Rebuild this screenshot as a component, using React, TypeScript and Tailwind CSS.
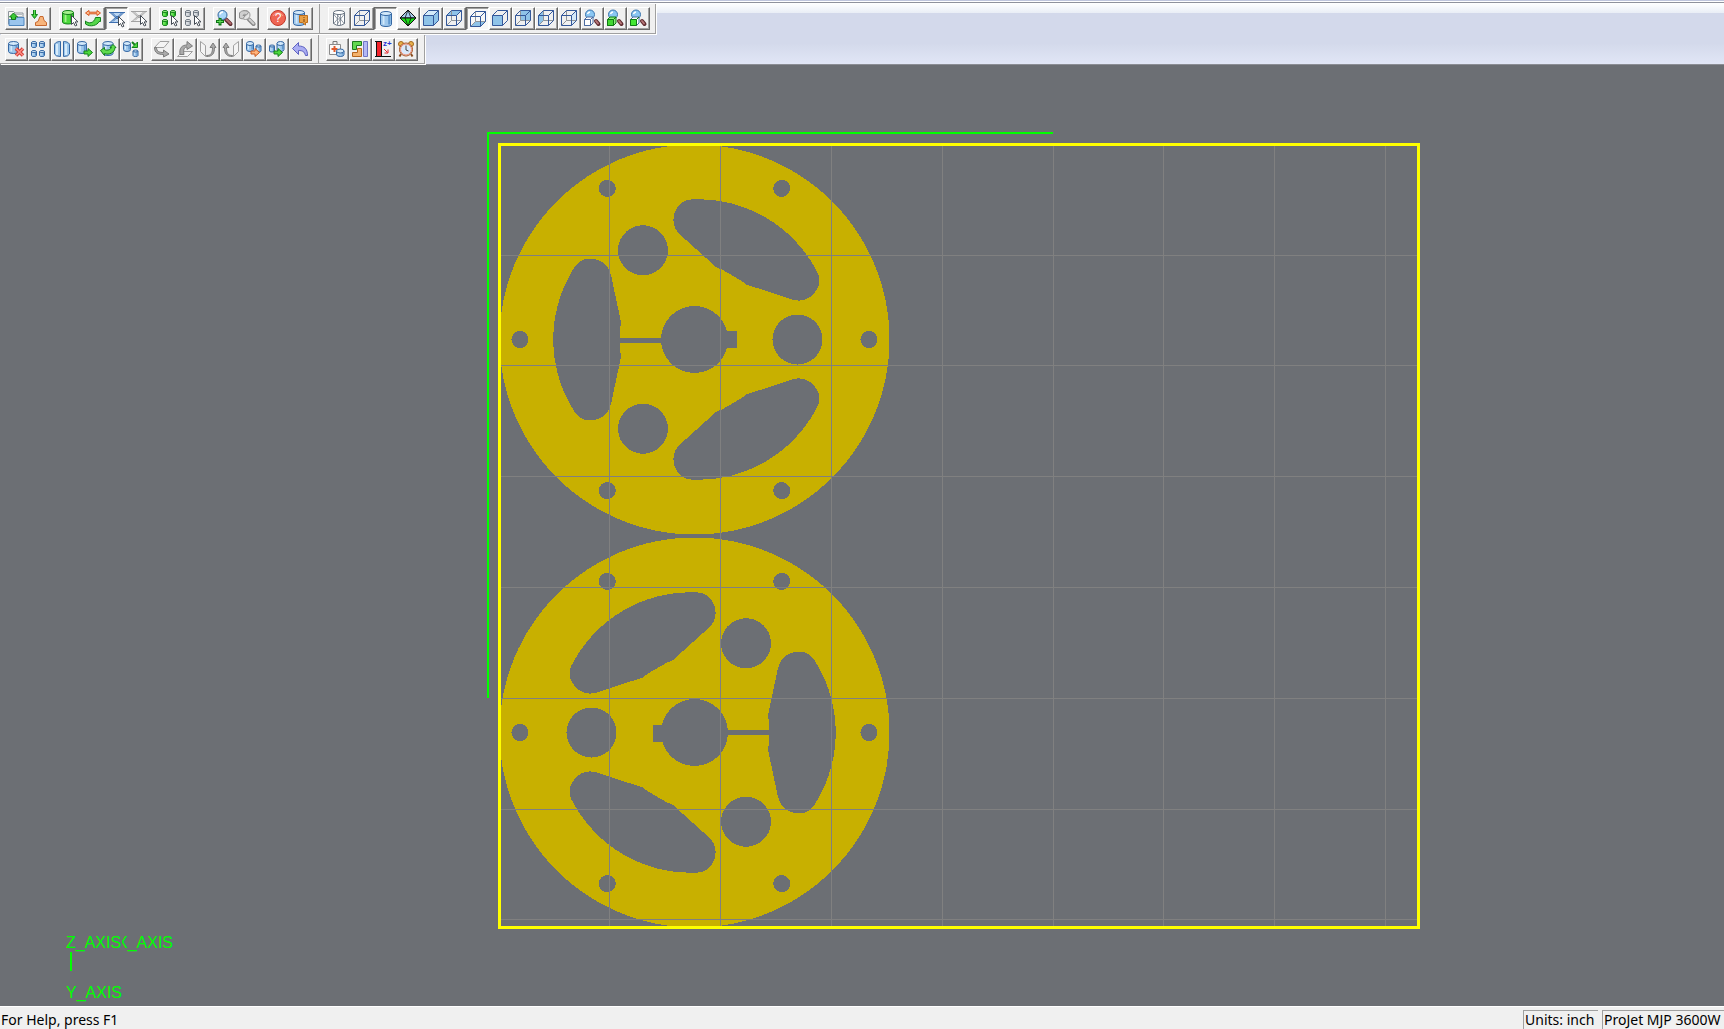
import React, { ReactNode } from 'react';
import clsx from 'clsx';

type Tool = { label: string; icon: ReactNode; pressed?: boolean };

type Palette = { line: string; body: string; top: string; shade: string };

const BLUE: Palette = { line: '#3567a3', body: '#9fc8ec', top: '#d3e9fa', shade: '#5f97cf' };
const GREEN: Palette = { line: '#14801a', body: '#4cd83c', top: '#a4f08c', shade: '#22a524' };
const GREY: Palette = { line: '#6d7680', body: '#cfd3d8', top: '#eef0f2', shade: '#a9afb6' };

type CylProps = { x: number; y: number; w: number; h: number; c?: Palette };

const Cyl = ({ x, y, w, h, c = BLUE }: CylProps) => {
  const ry = w > 6 ? 2 : 1;
  const r = w / 2;
  return (
    <g stroke={c.line}>
      <path d={`M${x} ${y + ry}v${h - 2 * ry}a${r} ${ry} 0 0 0 ${w} 0v${2 * ry - h}z`} fill={c.body} />
      <path d={`M${x + w * 0.8} ${y + ry + 1}v${h - 2 * ry - 1}`} stroke={c.shade} strokeWidth={w * 0.2} />
      <path d={`M${x + w * 0.28} ${y + ry + 1}v${h - 2 * ry - 1}`} stroke={c.top} strokeWidth={w * 0.16} />
      <ellipse cx={x + r} cy={y + ry} rx={r} ry={ry} fill={c.top} />
    </g>
  );
};

const Cursor = () => (
  <path d="M9.5 5.5v9l2-2 1.8 3.5 1.6-.8-1.7-3.3h2.8z" fill="#fff" stroke="#444b54" />
);

const FACES = {
  none: '',
  all: 'M.5 5.5 5.5.5h10v10l-5 5H.5z',
  top: 'M.5 5.5 5.5.5h10l-5 5z',
  bottom: 'M.5 15.5l5-5h10l-5 5z',
  front: 'M.5 5.5h10v10H.5z',
  back: 'M5.5.5h10v10h-10z',
  left: 'M.5 5.5 5.5.5v10l-5 5z',
  right: 'M10.5 5.5l5-5v10l-5 5z',
};

const Cube = ({ face }: { face: keyof typeof FACES }) => (
  <g strokeLinejoin="round">
    <path d={FACES[face]} fill={face === 'right' ? '#d6e8f7' : '#8fc3e8'} />
    {face === 'all' && <path d="M.5 5.5 5.5.5h10l-5 5z" fill="#d5ebfa" />}
    {face !== 'all' && face !== 'front' && (
      <path d="M5.5.5v10h10M5.5 10.5l-5 5" fill="none" stroke="#8f9499" />
    )}
    <path d="M.5 5.5 5.5.5h10v10l-5 5H.5zM.5 5.5h10v10M10.5 5.5l5-5" fill="none" stroke="#34589a" />
  </g>
);

const Lens = ({ grey }: { grey?: boolean }) => (
  <g>
    <path d="M10 9.5l4.5 4.5" stroke={grey ? '#888' : '#5e2a2e'} strokeWidth="4" strokeLinecap="round" />
    <path d="M10.5 9.5l4 4" stroke={grey ? '#d0d0d0' : '#b06a6c'} strokeWidth="2" strokeLinecap="round" />
    <circle cx="6.5" cy="5" r="4.5" fill={grey ? '#e4e4e4' : '#a8d6f8'} stroke={grey ? '#999' : '#33669e'} />
    <path d="M4 4.5A3 3 0 0 1 7 2" fill="none" stroke="#fff" strokeWidth="1.5" />
  </g>
);

const ZoomCube = ({ front, rest }: { front: string; rest: string }) => (
  <g>
    <path d="M12 11l2.5 3" stroke="#5e2a2e" strokeWidth="4" strokeLinecap="round" />
    <path d="M12 11l2 2.5" stroke="#b8777a" strokeWidth="2" strokeLinecap="round" />
    <circle cx="6" cy="4.5" r="4.5" fill="#8ac6f2" stroke="#3a74ad" />
    <path d="M3.5 4A3 3 0 0 1 6 2" fill="none" stroke="#fff" strokeWidth="1.5" />
    <path d="M.5 9.5l2.500-2.500h6v6l-2.500 2.500h-6z" fill={rest} stroke={rest === '#fff' ? '#4a6aa0' : '#0f7a14'} />
    <path d="M.5 9.5h6v6h-6zM6.5 9.5L9 7" fill={front} stroke={front === '#fff' ? '#4a6aa0' : '#0f7a14'} />
  </g>
);

const Mesh = ({ line, fill }: { line: string; fill: string }) => (
  <g>
    <path d="M1 1.5h14L8 8zM1 11.5L8 5l7 6.500z" fill={fill} stroke={line} />
    <path d="M0 1.5h16M0 11.5h9M3 1.5l9 9M13 1.5l-9 9" stroke={line} />
    <Cursor />
  </g>
);

const FourCyls = ({ c }: { c: Palette }) => (
  <g>
    <Cyl x={0.5} y={0.5} w={5} h={6} c={c} />
    <Cyl x={8.5} y={0.5} w={5} h={6} c={c} />
    <Cyl x={0.5} y={9.5} w={5} h={6} c={c} />
  </g>
);

const Arrow = ({ x, y, fill, line }: { x: number; y: number; fill: string; line: string }) => (
  <path d={`M${x} ${y - 1.5}h4v-2.5l4.5 4-4.5 4v-2.5h-4z`} fill={fill} stroke={line} />
);

const Flip = ({ sheet, arrow }: { sheet: string; arrow: string }) => (
  <g strokeLinejoin="round">
    <path d={sheet} fill="#f4f4f4" stroke="#a0a0a0" />
    <path d={arrow} fill="#aaa" stroke="#7c7c7c" />
  </g>
);

const FILE_TOOLS: Tool[] = [
  {
    label: 'Open',
    icon: (
      <g>
        <path d="M.5 14V1.5h5L7 3h8v11z" fill="#f6f6f2" stroke="#8d949c" />
        <path d="M7 4.5h7M7 6.5h7" stroke="#b8bec4" />
        <path d="M1 15.5v-6h6l2-2h7v8z" fill="#9bc5ed" stroke="#4f86be" />
        <path d="M5.5 3l4 4h-2v2.5h-4V7h-2z" fill="#3ccb35" stroke="#11771a" />
      </g>
    ),
  },
  {
    label: 'Import part',
    icon: (
      <g>
        <path d="M4.5 15.5v-3l2.500-1 2-5h3l1 4 2.500 2v3z" fill="#f7b57c" stroke="#c7682f" />
        <path d="M3.5 0v5" stroke="#16861c" strokeWidth="3" />
        <path d="M.5 4.5h6l-3 4z" fill="#3ccb35" stroke="#16861c" />
        <path d="M3.5 0v6" stroke="#5fe04f" />
      </g>
    ),
  },
];

const SELECT_TOOLS: Tool[] = [
  { label: 'Select part', icon: <g><Cyl x={0.5} y={0.5} w={11} h={13.5} c={GREEN} /><Cursor /></g> },
  {
    label: 'Invert selection',
    icon: (
      <g>
        <path d="M.5 3L4 .5v1.700h8V.5L15.5 3 12 5.5V3.800H4v1.700z" fill="#ffc08e" stroke="#d9551f" />
        <path d="M10.5 7.5h5v4H14c-1.500 4-9 6-13.500 2.500V11c3 3 8.500 2.500 10-3.500z" fill="#56d64b" stroke="#12801c" />
      </g>
    ),
  },
  { label: 'Select facets', pressed: true, icon: <Mesh line="#3d6fb0" fill="#bcd6f2" /> },
  { label: 'Deselect facets', icon: <Mesh line="#a2a2a2" fill="#f1f1f1" /> },
];

const GROUP_TOOLS: Tool[] = [
  { label: 'Select all', icon: <g><FourCyls c={GREEN} /><Cursor /></g> },
  { label: 'Deselect all', icon: <g><FourCyls c={GREY} /><Cursor /></g> },
];

const ZOOM_TOOLS: Tool[] = [
  {
    label: 'Zoom in',
    icon: (
      <g>
        <Lens />
        <path d="M4 8v7.500M0 11.5h8" stroke="#0c7514" strokeWidth="3" />
        <path d="M4 9v5M1 11.5h6" stroke="#65e05a" />
      </g>
    ),
  },
  {
    label: 'Zoom previous',
    icon: (
      <g>
        <Lens grey />
        <path d="M.5 8V3c2-3 7-3 9-.5L7.5 5C6 4 4.500 4 4 5.500h2.500L3.500 9z" fill="#cfcfcf" stroke="#8e8e8e" />
      </g>
    ),
  },
];

const HELP_TOOLS: Tool[] = [
  {
    label: 'Help',
    icon: (
      <g>
        <circle cx="8" cy="8" r="7.5" fill="#ef6553" stroke="#c33829" />
        <path d="M3 6a5.500 5.500 0 0 1 10 0" fill="none" stroke="#f89e8e" />
        <text x="8" y="12" textAnchor="middle" fontSize="12" fill="#fff" fontFamily="Liberation Sans">?</text>
      </g>
    ),
  },
  {
    label: 'Part info',
    icon: (
      <g>
        <Cyl x={0.5} y={0.5} w={11} h={15} />
        <path d="M6.5 5.5h8v7h-2v2.500l-3-2.500h-3z" fill="#e9a046" stroke="#bd6e1c" />
        <path d="M11 7v1M11 9v3" stroke="#7c430b" />
      </g>
    ),
  },
];

const VIEW_TOOLS: Tool[] = [
  {
    label: 'Wireframe',
    icon: (
      <g fill="none" stroke="#66717f">
        <path d="M2.500 2.500v11q5.500 4 11 0v-11" fill="#fff" />
        <ellipse cx="8" cy="2.5" rx="5.5" ry="2" fill="#fff" />
        <path d="M2.500 4l4 5-4 5M13.500 4l-4 5 4 5M6.500 4v11M9.500 4v11M6.500 9h3M6.500 5l3 4-3 5" strokeWidth=".7" />
      </g>
    ),
  },
  { label: 'Bounding box', icon: <Cube face="none" /> },
  { label: 'Shaded', pressed: true, icon: <Cyl x={2.5} y={0.5} w={11} h={15} /> },
  {
    label: 'Isometric view',
    icon: (
      <g strokeLinejoin="round">
        <path d="M8 0L0 8h16z" fill="#a9cdee" stroke="#111" />
        <path d="M0 8h16l-8 8z" fill="#1fe01c" stroke="#111" />
        <path d="M8 0L5 8l3 8 3-8z" fill="none" stroke="#111" strokeWidth=".8" />
      </g>
    ),
  },
  { label: 'Solid view', icon: <Cube face="all" /> },
  { label: 'Top view', icon: <Cube face="top" /> },
  { label: 'Bottom view', pressed: true, icon: <Cube face="bottom" /> },
  { label: 'Front view', icon: <Cube face="front" /> },
  { label: 'Back view', icon: <Cube face="back" /> },
  { label: 'Left view', icon: <Cube face="left" /> },
  { label: 'Right view', icon: <Cube face="right" /> },
  { label: 'Zoom to platform', icon: <ZoomCube front="#fff" rest="#fff" /> },
  { label: 'Zoom to parts', icon: <ZoomCube front="#43d632" rest="#8cf07c" /> },
  { label: 'Zoom to selection', icon: <ZoomCube front="#43e632" rest="#fff" /> },
];

const PART_TOOLS: Tool[] = [
  {
    label: 'Delete part',
    icon: (
      <g>
        <Cyl x={0.5} y={0.5} w={10} h={12} />
        <path d="M8 7.500l7 7M15 7.500l-7 7" stroke="#cf3a35" strokeWidth="3.5" />
        <path d="M8 7.500l7 7M15 7.500l-7 7" stroke="#ff8d82" strokeWidth="1.5" />
      </g>
    ),
  },
  { label: 'Array parts', icon: <g><FourCyls c={BLUE} /><Cyl x={8.5} y={9.5} w={5} h={6} /></g> },
  {
    label: 'Mirror part',
    icon: (
      <g stroke="#3567a3">
        <path d="M6.5.5c-3.500 0-6 1.500-6 3.500v9q1 2.500 6 2.500zM9.500.5c3.500 0 6 1.500 6 3.500v9q-1 2.500-6 2.500z" fill="#9fc8ec" />
        <path d="M3 3v11M12 3v11" stroke="#d8ecfb" strokeWidth="2" />
      </g>
    ),
  },
  { label: 'Move part', icon: <g><Cyl x={0.5} y={0.5} w={9} h={12} /><Arrow x={7} y={11.5} fill="#4cd83c" line="#14801a" /></g> },
  {
    label: 'Rotate part',
    icon: (
      <g>
        <Cyl x={3} y={0.5} w={10} h={14} />
        <path d="M.5 9.500l4-3v2c3 1.500 6 0 7-2H10l3-3 3 3h-1c0 5-6 8-10.500 6v2z" fill="#5fdb4e" stroke="#14801a" />
      </g>
    ),
  },
  {
    label: 'Copy part',
    icon: (
      <g>
        <Cyl x={0.5} y={0.5} w={7} h={10} />
        <Cyl x={10} y={9} w={5} h={6.5} />
        <path d="M9 1l3 3" stroke="#14801a" strokeWidth="2" />
        <path d="M14.500 1v5.500H9z" fill="#4cd83c" stroke="#14801a" />
      </g>
    ),
  },
];

const FLIP_TOOLS: Tool[] = [
  { label: 'Flip down', icon: <Flip sheet="M.5 6.500L6 .5h9l-5 6z" arrow="M2.500 6.500c0 4 3 5 7 5V9l5.500 4-5.500 3v-2.500c-6 0-9-2-9-7z" /> },
  { label: 'Flip up', icon: <Flip sheet="M.5 15.500l5-5h10l-5 5z" arrow="M3 13.500C2 7 5 4 10 4V.5L15.500 5 10 8.500V6C7 6 6 9 7 13.500z" /> },
  { label: 'Flip right', icon: <Flip sheet="M.5.5l5 4v11l-5-5z" arrow="M6.500 14.500c5 0 6-3 6-8H10l3-4.500 3 4.500h-1.500c0 6-2 9-8 9z" /> },
  { label: 'Flip left', icon: <Flip sheet="M15.500.5l-5 4v11l5-5z" arrow="M9.500 14.500c-5 0-6-3-6-8H6L3 2 0 6.500h1.500c0 6 2 9 8 9z" /> },
  {
    label: 'Export part',
    icon: <g><Cyl x={0.5} y={0.5} w={7} h={10} /><Cyl x={10} y={4} w={5} h={7} /><Arrow x={5} y={11.5} fill="#ffb37a" line="#c9571c" /></g>,
  },
  {
    label: 'Place part',
    icon: <g><Cyl x={0.5} y={4} w={5} h={7} /><Cyl x={8} y={0.5} w={7} h={10} /><Arrow x={5} y={11.5} fill="#4cd83c" line="#14801a" /></g>,
  },
  {
    label: 'Undo',
    icon: <path d="M.5 7.500l6-6V5c6 0 9 3 9 9.500h-2c-1-4-3-5-7-5v4z" fill="#a9acf2" stroke="#5c60c0" strokeLinejoin="round" />,
  },
];

const BUILD_TOOLS: Tool[] = [
  {
    label: 'Repair',
    icon: (
      <g>
        <path d="M.5 3.500h11v10H.5z" fill="#fafafa" stroke="#8b8b8b" />
        <path d="M4 3V.5h4V3" fill="none" stroke="#777" />
        <path d="M5.500 5v6M2.500 8h6" stroke="#df5a2c" strokeWidth="2" />
        <Cyl x={7.5} y={8} w={7.5} h={7.5} />
      </g>
    ),
  },
  {
    label: 'Nest parts',
    icon: (
      <g>
        <path d="M.5.5h9v4h-5v4h-4z" fill="#62d84e" stroke="#1d7a1c" />
        <path d="M.5 15.500v-4h5v-4h4v8z" fill="#f4b26c" stroke="#b5641d" />
        <path d="M11.500.5h4v15h-4z" fill="#b3b8f5" stroke="#6f74c6" />
      </g>
    ),
  },
  {
    label: 'Z height',
    icon: (
      <g>
        <path d="M0 .5h7M0 15.500h16" stroke="#111" />
        <path d="M1.500.5h5v15h-5z" fill="#f3232b" stroke="#111" />
        <text x="8" y="5" fontSize="8" fontWeight="700" fill="#2a35d0" fontFamily="Liberation Sans">z+</text>
        <path d="M9 8l3.500 3.500M13 8.500V12H9.500" fill="none" stroke="#e5262b" />
      </g>
    ),
  },
  {
    label: 'Build time',
    icon: (
      <g>
        <path d="M3 13l-1.500 2.500M13 13l1.500 2.500" stroke="#8a4c1d" strokeWidth="2" />
        <circle cx="3" cy="3" r="2.5" fill="#e9b34e" stroke="#a4691d" />
        <circle cx="13" cy="3" r="2.5" fill="#e9b34e" stroke="#a4691d" />
        <circle cx="8" cy="8.5" r="6.5" fill="#dbe9fb" stroke="#a4501d" />
        <circle cx="8" cy="8.5" r="5.5" fill="#dbe9fb" stroke="#ee8a6c" />
        <path d="M8 4.500v4.500l2.500 1" fill="none" stroke="#444" />
      </g>
    ),
  },
];

const ToolButton = ({ label, icon, pressed }: Tool) => (
  <button
    type="button"
    aria-label={label}
    aria-pressed={pressed}
    className={clsx(
      'flex size-[23px] items-start justify-start border',
      pressed
        ? 'border-t-[#696969] border-r-white border-b-white border-l-[#696969] bg-[#f8f8f8] pt-[3px] pl-[3px] shadow-[inset_1px_1px_0_#a0a0a0]'
        : 'border-t-white border-r-[#696969] border-b-[#696969] border-l-white bg-[#f0f0f0] pt-[2px] pl-[2px] shadow-[inset_-1px_-1px_0_#a0a0a0]',
    )}
  >
    <svg viewBox="0 0 16 16" className="size-4 shrink-0 overflow-visible" aria-hidden="true">
      {icon}
    </svg>
  </button>
);

const ToolGroup = ({ tools }: { tools: Tool[] }) => (
  <div className="flex">
    {tools.map((tool) => (
      <ToolButton key={tool.label} {...tool} />
    ))}
  </div>
);

type ToolBarProps = { label: string; children: ReactNode; className?: string };

const ToolBar = ({ label, children, className }: ToolBarProps) => (
  <div
    role="toolbar"
    aria-label={label}
    className={clsx(
      'flex items-start gap-2 border-r border-b border-[#a0a0a0] bg-[#f0f0f0] pt-[3px] shadow-[1px_1px_0_#fff]',
      className,
    )}
  >
    {children}
  </div>
);

// slot outline around the disc centre, in thirds of a pixel
const SLOT =
  'M-223 0V-36L-220-50L-226-78L-250-191C-254-218-276-243-313-243C-340-243-355-229-366-207A400 400 0 0 0-366 207C-355 229-340 243-313 243C-276 243-254 218-250 191L-226 78L-220 50L-223 36Z';

const Disc = ({ transform }: { transform: string }) => (
  <g transform={transform}>
    <circle r="195" fill="#c8b000" />
    <g fill="#6c6f74">
      <circle r="33.5" />
      <path d="M0-9h42V8H0zM-75-2h50V3h-50z" />
      {[0, 60, 120, 180, 240, 300].map((angle) => (
        <circle key={angle} cx="174.5" r="8.5" transform={`rotate(${angle})`} />
      ))}
      {[0, 120, 240].map((angle) => (
        <g key={angle} transform={`rotate(${angle})`}>
          <circle cx="103" r="25" />
          <path d={SLOT} transform="scale(.3333)" />
        </g>
      ))}
    </g>
  </g>
);

const GRID_X = [609, 720, 831, 942, 1053, 1163, 1274, 1385];
const GRID_Y = [255, 365, 476, 587, 698, 809, 919];

const Platform = () => (
  <svg
    viewBox="0 65 1724 941"
    preserveAspectRatio="xMinYMin meet"
    className="block size-full"
    role="img"
    aria-label="Build platform"
  >
    <clipPath id="behind-z">
      <path d="M122 930h60v25h-60z" />
    </clipPath>
    <g shapeRendering="crispEdges" fill="none">
      <Disc transform="translate(694.5 339.5)" />
      <Disc transform="translate(694.5 732.5) rotate(180)" />
      <g stroke="#808080">
        {GRID_X.map((x) => (
          <path key={x} d={`M${x + 0.5} 146V926`} />
        ))}
        {GRID_Y.map((y) => (
          <path key={y} d={`M501 ${y + 0.5}H1417`} />
        ))}
      </g>
      <path d="M1053 133H488V698" stroke="#0f0" strokeWidth="2" />
      <path d="M499.5 144.5H1418.5V927.5H499.5Z" stroke="#ff0" strokeWidth="3" />
      <path d="M71 952V971" stroke="#0f0" strokeWidth="2" />
    </g>
    <g fill="#0f0" fontSize="16" fontFamily="Liberation Sans, Arial, sans-serif">
      <text x="66" y="948">Z_AXIS</text>
      <text x="117" y="948" clipPath="url(#behind-z)">X_AXIS</text>
      <text x="66" y="998">Y_AXIS</text>
    </g>
  </svg>
);

const StatusBar = () => (
  <footer className="flex h-[23px] shrink-0 gap-1 overflow-hidden border-t border-white bg-[#f0f0f0] pt-[3px] text-sm whitespace-nowrap text-black">
    <p className="flex-1 pl-px">For Help, press F1</p>
    <p className="w-[75px] border-t border-l border-[#a0a0a0] pl-px leading-[18px]">Units: inch</p>
    <p className="w-[122px] border-t border-l border-[#a0a0a0] pl-px leading-[18px]">ProJet MJP 3600W</p>
  </footer>
);

export default function App() {
  return (
    <div className="flex h-screen flex-col overflow-hidden bg-[#6c6f74] font-['Noto_Sans','Open_Sans',sans-serif]">
      <header className="shrink-0 border-t border-b border-t-[#bfc5dc] border-b-[#8b8d94] bg-[#d3daed]">
        <div className="border-t border-b border-t-white border-b-[#8f929c]" />
        <div className="bg-[linear-gradient(#fff,#e9eef6_10px,#d3d9eb_10px,#d3d9eb_40px,#e1e6f6)]">
          <div className="flex pt-px">
            <ToolBar label="Standard" className="h-[30px] w-[320px] pl-[5px]">
              <ToolGroup tools={FILE_TOOLS} />
              <ToolGroup tools={SELECT_TOOLS} />
              <ToolGroup tools={GROUP_TOOLS} />
              <ToolGroup tools={ZOOM_TOOLS} />
              <ToolGroup tools={HELP_TOOLS} />
            </ToolBar>
            <ToolBar label="View" className="h-[30px] pr-[5px] pl-2">
              <ToolGroup tools={VIEW_TOOLS} />
            </ToolBar>
          </div>
          <div className="flex pt-px">
            <ToolBar label="Parts" className="h-[29px] w-[319px] pl-[5px]">
              <ToolGroup tools={PART_TOOLS} />
              <ToolGroup tools={FLIP_TOOLS} />
            </ToolBar>
            <ToolBar label="Build" className="h-[29px] pr-[6px] pl-[7px]">
              <ToolGroup tools={BUILD_TOOLS} />
            </ToolBar>
          </div>
        </div>
      </header>

      <main className="min-h-0 flex-1">
        <Platform />
      </main>

      <StatusBar />
    </div>
  );
}
